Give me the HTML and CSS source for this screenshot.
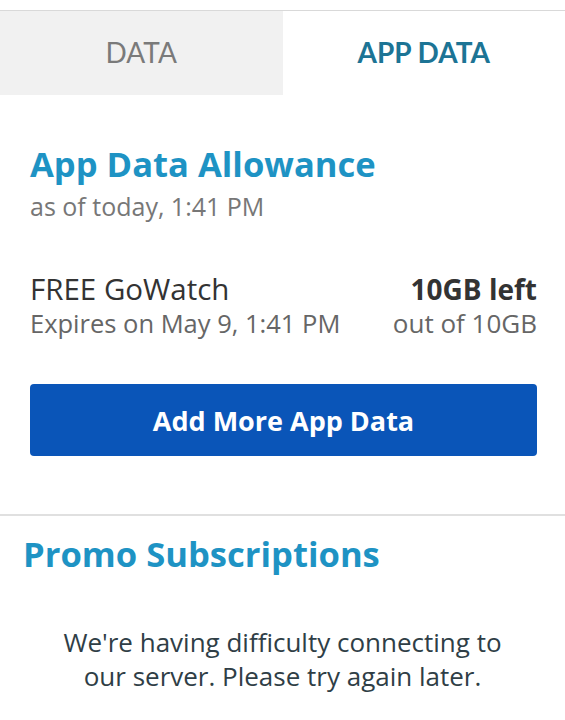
FILE: index.html
```html
<!DOCTYPE html>
<html>
<head>
    <title>App Data</title>
    <link rel="stylesheet" href="styles.css">
</head>
<body>
    <div class="tabs">
        <a class="tab" href="#">DATA</a>
        <a class="tab active" href="#">APP DATA</a>
    </div>

    <div class="allowance">
        <h2 class="title">App Data Allowance</h2>
        <div class="stamp">as of today, 1:41 PM</div>

        <div class="row">
            <div class="left">
                <div class="name">FREE GoWatch</div>
                <div class="meta">Expires on May 9, 1:41 PM</div>
            </div>
            <div class="right">
                <div class="name bold">10GB left</div>
                <div class="meta">out of 10GB</div>
            </div>
        </div>

        <button class="add-btn">Add More App Data</button>
    </div>

    <div class="promo">
        <h2 class="title">Promo Subscriptions</h2>
        <p class="error">We're having difficulty connecting to<br>our server. Please try again later.</p>
    </div>
</body>
</html>
```

FILE: styles.css
```css
body {
    margin: 0;
    background: #fff;
    font-family: "Open Sans", Lato, sans-serif;
    padding-top: 10px;
}
.tabs {
    display: flex;
    border-top: 1px solid #d9d9d9;
    height: 84px;
}
.tab {
    flex: 1;
    display: flex;
    align-items: center;
    justify-content: center;
    text-decoration: none;
    font-family: Lato, sans-serif;
    font-size: 28px;
    color: #7a7a7a;
    background-color: #f1f1f1;
    padding-bottom: 2px;
}
.tab.active {
    background-color: #fff;
    color: #1c7495;
    font-weight: bold;
}
.title {
    margin: 0;
    color: #1e93c4;
    font-size: 34.6px;
    font-weight: bold;
    line-height: 40px;
}
.allowance {
    padding: 49px 28px 58px 30px;
    border-bottom: 2px solid #e0e0e0;
}
.stamp {
    color: #777;
    font-size: 25px;
    line-height: 30px;
    margin-top: 7px;
}
.row {
    display: flex;
    justify-content: space-between;
    margin-top: 51px;
}
.right {
    text-align: right;
}
.name {
    color: #333;
    font-size: 29.5px;
    line-height: 34px;
}
.name.bold {
    font-size: 28px;
    font-weight: bold;
}
.meta {
    color: #666;
    font-size: 25.5px;
    line-height: 32px;
    margin-top: 1px;
}
.right .meta {
    font-size: 26px;
}
.add-btn {
    display: block;
    width: 100%;
    height: 72px;
    margin-top: 45px;
    border: none;
    border-radius: 4px;
    background-color: #0a55b8;
    color: #fff;
    font-family: inherit;
    font-size: 27px;
    font-weight: bold;
    cursor: pointer;
}
.promo {
    padding: 18px 23px;
}
.error {
    text-align: center;
    color: #2f3e46;
    font-size: 26px;
    line-height: 34px;
    margin: 51px 0 0;
}
```
